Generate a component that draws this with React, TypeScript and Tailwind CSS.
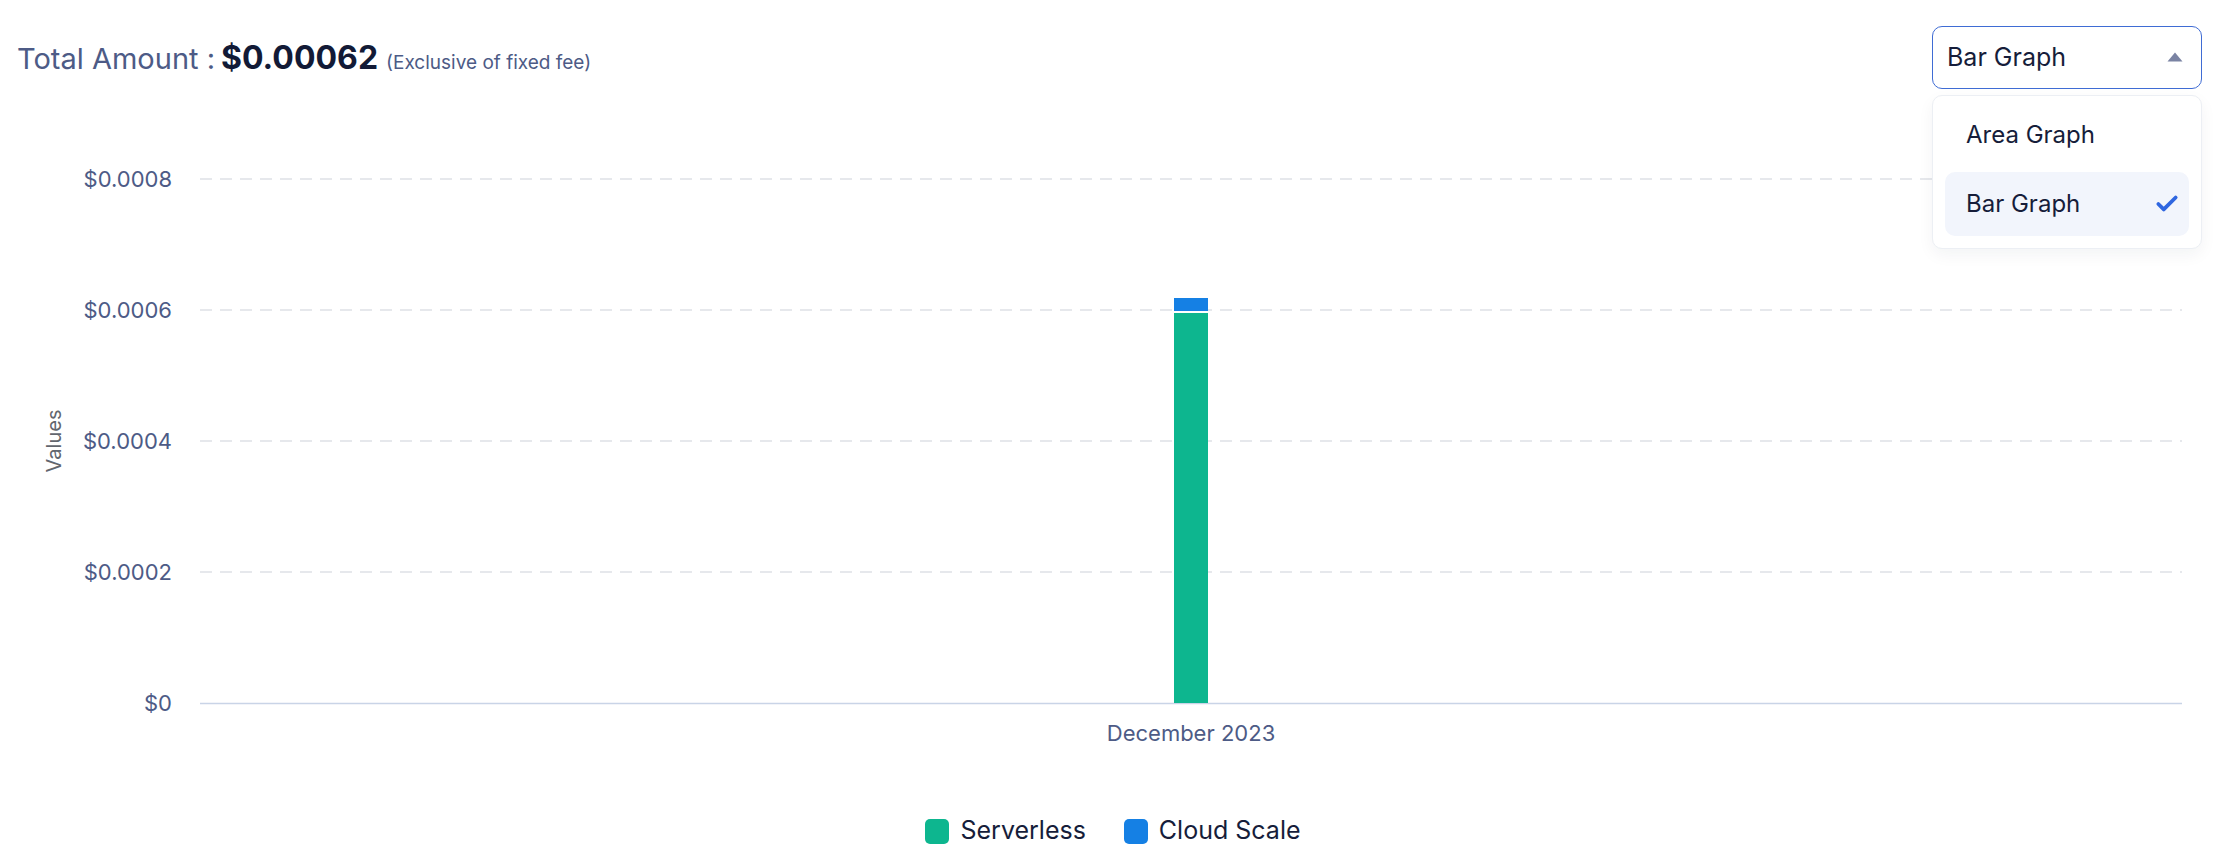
import { Check } from 'lucide-react'

const slate = '#4d5b86'
const gridYs = [90, 221, 352, 483]
const yLabels = ['$0.0008', '$0.0006', '$0.0004', '$0.0002']

function GraphSelect() {
    return (
        <div className="relative w-[270px]">
            <button className="flex h-[63px] w-full items-center justify-between rounded-[10px] border-[1.5px] border-[#3f6cd4] bg-white pl-[14px] pr-[18px] text-[25px] text-[#161d3a]">
                <span>Bar Graph</span>
                <svg width="16" height="10" viewBox="0 0 16 10" className="mb-[2px]">
                    <path d="M8 0.5 L15.5 9.5 L0.5 9.5 Z" fill="#7a83a3" strokeLinejoin="round" />
                </svg>
            </button>

            {/* open menu */}
            <div className="absolute left-0 top-[69px] z-10 flex w-full flex-col gap-[6px] rounded-[10px] border border-[#eceff4] bg-white px-[12px] pb-[12px] pt-[8px] shadow-[0_6px_16px_rgba(20,30,60,0.05)]">
                <div className="flex h-[62px] items-center pl-[21px] text-[24px] text-[#161d3a]">Area Graph</div>
                <div className="flex h-[64px] items-center justify-between rounded-[10px] bg-[#f2f5fc] pl-[21px] pr-[9px] text-[24px] text-[#161d3a]">
                    <span>Bar Graph</span>
                    <Check className="h-[26px] w-[26px] text-[#2f66e0]" strokeWidth={3.5} />
                </div>
            </div>
        </div>
    )
}

function BarChart() {
    return (
        <svg width="2226" height="713" className="block" style={{ fontFamily: 'Inter, sans-serif' }}>
            {/* y axis title */}
            <text
                x="61"
                y="352"
                transform="rotate(-90 61 352)"
                textAnchor="middle"
                fontSize="20"
                fill="#62666e"
            >
                Values
            </text>

            {/* grid */}
            {gridYs.map((y, i) => (
                <g key={y}>
                    <line x1="200" x2="2182" y1={y} y2={y} stroke="#e6e8ec" strokeWidth="2" strokeDasharray="12 8" />
                    <text x="172" y={y + 8} textAnchor="end" fontSize="22" fill={slate}>
                        {yLabels[i]}
                    </text>
                </g>
            ))}
            <line x1="200" x2="2182" y1="614.5" y2="614.5" stroke="#c9d4e7" strokeWidth="1.5" />
            <text x="172" y="622" textAnchor="end" fontSize="22" fill={slate}>
                $0
            </text>

            {/* stacked bar */}
            <rect x="1174" y="224" width="34" height="390" fill="#0db68f" />
            <rect x="1174" y="209" width="34" height="13" fill="#1580e4" />

            <text x="1191" y="652" textAnchor="middle" fontSize="22" fill={slate}>
                December 2023
            </text>
        </svg>
    )
}

export default function App() {
    return (
        <div className="h-[868px] w-[2226px] overflow-hidden bg-white font-['Inter',sans-serif]">
            {/* Header */}
            <div className="flex items-center justify-between pl-[17px] pr-[24px] pt-[26px]">
                <div className="flex items-baseline text-[#4d5b86]">
                    <span className="mr-[6px] text-[29px]">Total Amount :</span>
                    <span className="mr-[8px] text-[32px] font-bold text-[#121a36]">$0.00062</span>
                    <span className="text-[19px]">(Exclusive of fixed fee)</span>
                </div>
                <GraphSelect />
            </div>

            <BarChart />

            {/* Legend */}
            <div className="flex h-[58px] items-center justify-center gap-[38px]">
                <div className="flex items-center gap-[11px]">
                    <span className="h-[25px] w-[24px] rounded-[5px] bg-[#0db68f]"></span>
                    <span className="text-[25px] text-[#161d3a]">Serverless</span>
                </div>
                <div className="flex items-center gap-[11px]">
                    <span className="h-[25px] w-[24px] rounded-[5px] bg-[#1580e4]"></span>
                    <span className="text-[25px] text-[#161d3a]">Cloud Scale</span>
                </div>
            </div>
        </div>
    )
}
